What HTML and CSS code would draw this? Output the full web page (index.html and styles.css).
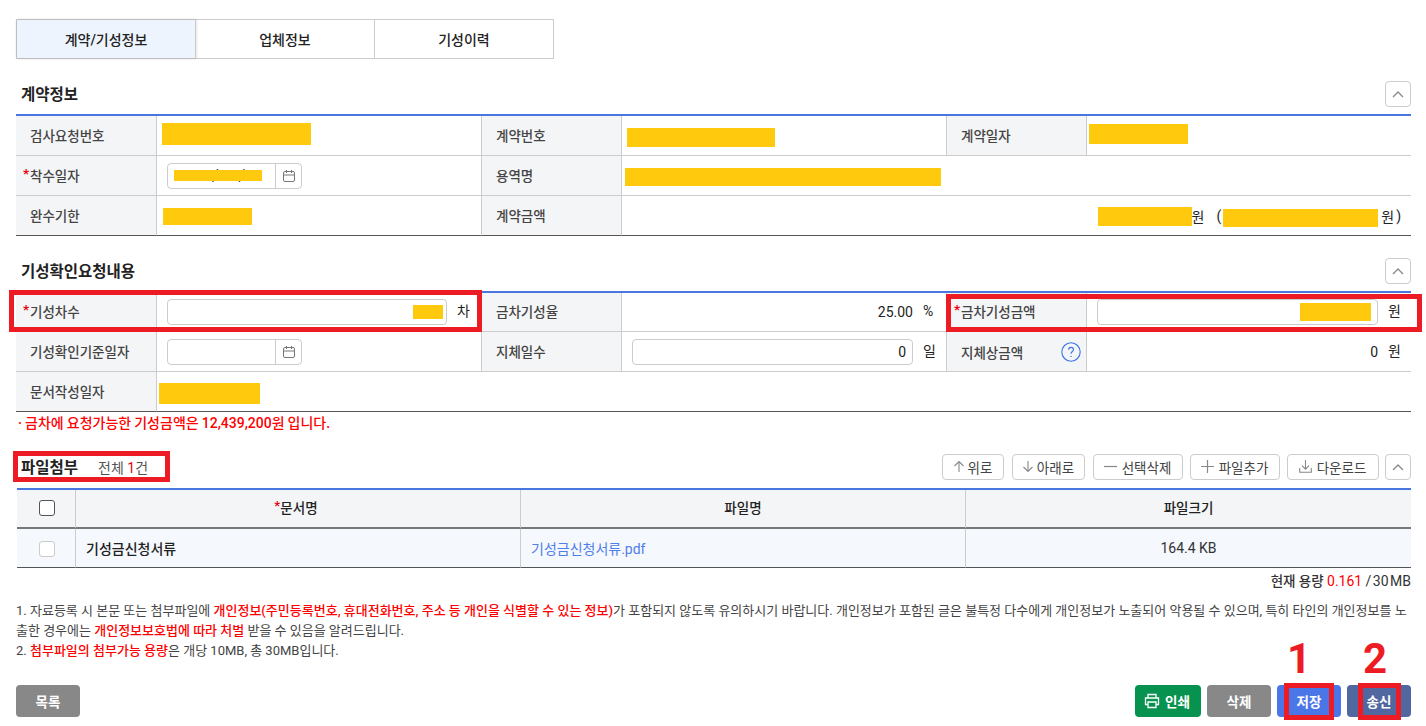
FILE: index.html
```html
<!DOCTYPE html>
<html lang="ko">
<head>
<meta charset="utf-8">
<title>기성확인요청</title>
<link rel="stylesheet" href="styles.css">
</head>
<body>
<div class="topbar"></div>
<main class="page">
  <nav class="tabs">
    <a class="tab active">계약/기성정보</a>
    <a class="tab">업체정보</a>
    <a class="tab">기성이력</a>
  </nav>

  <section class="sec">
    <header class="sec-head">
      <h2>계약정보</h2>
      <button class="btn-fold"><svg width="12" height="8" viewBox="0 0 12 8"><path d="M1 7l5-5 5 5" fill="none" stroke="#888" stroke-width="1.3"/></svg></button>
    </header>
    <table class="form">
      <colgroup><col class="c1"><col class="c2"><col class="c3"><col class="c4"><col class="c5"><col class="c6"></colgroup>
      <tr>
        <th>검사요청번호</th>
        <td><div class="cell flush"><span class="red r-insp"></span></div></td>
        <th>계약번호</th>
        <td><div class="cell flush"><span class="red r-cno"></span></div></td>
        <th>계약일자</th>
        <td class="last"><div class="cell flush"><span class="red r-cdate"></span></div></td>
      </tr>
      <tr>
        <th><i class="req">*</i>착수일자</th>
        <td><div class="cell">
          <div class="date"><span class="date-val"><span class="slashes">/&nbsp;&nbsp;&nbsp;&nbsp;&nbsp;/</span><span class="red r-start"></span></span><span class="date-ic"><svg width="14" height="14" viewBox="0 0 14 14"><rect x="1.5" y="2.5" width="11" height="10" rx="1.5" fill="none" stroke="#777"/><path d="M1.5 6h11M4.5 1v3M9.5 1v3" fill="none" stroke="#777"/></svg></span></div>
        </div></td>
        <th>용역명</th>
        <td colspan="3" class="last"><div class="cell flush"><span class="red r-name"></span></div></td>
      </tr>
      <tr class="end">
        <th>완수기한</th>
        <td><div class="cell flush"><span class="red r-due"></span></div></td>
        <th>계약금액</th>
        <td colspan="3" class="last"><div class="cell right amount">
          <span class="red r-amt1"></span><span>원</span><span class="paren">(</span><span class="red r-amt2"></span><span class="won2">원</span><span class="paren2">)</span>
        </div></td>
      </tr>
    </table>
  </section>

  <section class="sec">
    <header class="sec-head">
      <h2>기성확인요청내용</h2>
      <button class="btn-fold"><svg width="12" height="8" viewBox="0 0 12 8"><path d="M1 7l5-5 5 5" fill="none" stroke="#888" stroke-width="1.3"/></svg></button>
    </header>
    <table class="form tight">
      <colgroup><col class="c1"><col class="c2"><col class="c3"><col class="c4"><col class="c5"><col class="c6"></colgroup>
      <tr>
        <th><i class="req">*</i>기성차수</th>
        <td><div class="cell">
          <div class="input w-seq"><span class="red r-seq"></span></div><span class="unit">차</span>
        </div></td>
        <th>금차기성율</th>
        <td><div class="cell right"><span class="val">25.00</span><span class="unit">%</span></div></td>
        <th><i class="req">*</i>금차기성금액</th>
        <td class="last"><div class="cell">
          <div class="input w-amt"><span class="red r-cur"></span></div><span class="unit">원</span>
        </div></td>
      </tr>
      <tr>
        <th>기성확인기준일자</th>
        <td><div class="cell">
          <div class="date"><span class="date-val"></span><span class="date-ic"><svg width="14" height="14" viewBox="0 0 14 14"><rect x="1.5" y="2.5" width="11" height="10" rx="1.5" fill="none" stroke="#777"/><path d="M1.5 6h11M4.5 1v3M9.5 1v3" fill="none" stroke="#777"/></svg></span></div>
        </div></td>
        <th>지체일수</th>
        <td><div class="cell">
          <div class="input w-delay">0</div><span class="unit">일</span>
        </div></td>
        <th><div class="th-flex">지체상금액<svg class="help" width="20" height="20" viewBox="0 0 20 20"><circle cx="10" cy="10" r="9.2" fill="none" stroke="#3f73e6" stroke-width="1.1"/><path d="M7.6 7.8c0-1.5 1.1-2.4 2.5-2.4s2.4.9 2.4 2.2c0 1.9-2.5 2-2.5 4.2" fill="none" stroke="#3f73e6" stroke-width="1.1"/><circle cx="10" cy="14.4" r=".7" fill="#3f73e6"/></svg></div></th>
        <td class="last"><div class="cell right"><span class="val">0</span><span class="unit">원</span></div></td>
      </tr>
      <tr class="end">
        <th>문서작성일자</th>
        <td colspan="5" class="last"><div class="cell flush"><span class="red r-doc"></span></div></td>
      </tr>
    </table>
    <p class="notice">· 금차에 요청가능한 기성금액은 12,439,200원 입니다.</p>
  </section>

  <section class="files">
    <header class="file-head">
      <div class="file-title"><h2>파일첨부</h2><span class="count">전체 <b>1</b>건</span></div>
      <div class="tools">
        <button class="tool t-up"><svg width="12" height="13" viewBox="0 0 12 13"><path d="M6 12V1.5M1.5 6L6 1.5 10.5 6" fill="none" stroke="#888" stroke-width="1.1"/></svg>위로</button>
        <button class="tool t-down"><svg width="12" height="13" viewBox="0 0 12 13"><path d="M6 1v10.5M1.5 7L6 11.5 10.5 7" fill="none" stroke="#888" stroke-width="1.1"/></svg>아래로</button>
        <button class="tool t-del"><svg width="13" height="13" viewBox="0 0 13 13"><path d="M0 6.5h13" fill="none" stroke="#888" stroke-width="1.2"/></svg>선택삭제</button>
        <button class="tool t-add"><svg width="13" height="13" viewBox="0 0 13 13"><path d="M0 6.5h13M6.5 0v13" fill="none" stroke="#888" stroke-width="1.2"/></svg>파일추가</button>
        <button class="tool t-get"><svg width="13" height="13" viewBox="0 0 13 13"><path d="M6.5 0v9M3 5.7l3.5 3.5L10 5.7M.7 8v4.3h11.6V8" fill="none" stroke="#888" stroke-width="1.1"/></svg>다운로드</button>
        <button class="btn-fold"><svg width="12" height="8" viewBox="0 0 12 8"><path d="M1 7l5-5 5 5" fill="none" stroke="#888" stroke-width="1.3"/></svg></button>
      </div>
    </header>
    <table class="grid">
      <colgroup><col class="g1"><col class="g2"><col class="g3"><col class="g4"></colgroup>
      <thead>
        <tr>
          <th><span class="cb cb-dark"></span></th>
          <th class="th-req"><i class="req-up">*</i>문서명</th>
          <th>파일명</th>
          <th class="last">파일크기</th>
        </tr>
      </thead>
      <tbody>
        <tr>
          <td><span class="cb"></span></td>
          <td class="doc">기성금신청서류</td>
          <td class="link">기성금신청서류.pdf</td>
          <td class="last">164.4 KB</td>
        </tr>
      </tbody>
    </table>
    <p class="cap">현재 용량 <em>0.161</em> <span class="cap-max">/ 30 MB</span></p>
  </section>

  <div class="notes">
    1. 자료등록 시 본문 또는 첨부파일에 <b>개인정보(주민등록번호, 휴대전화번호, 주소 등 개인을 식별할 수 있는 정보)</b>가 포함되지 않도록 유의하시기 바랍니다. 개인정보가 포함된 글은 불특정 다수에게 개인정보가 노출되어 악용될 수 있으며, 특히 타인의 개인정보를 노<br>
    출한 경우에는 <b>개인정보보호법에 따라 처벌</b> 받을 수 있음을 알려드립니다.<br>
    2. <b>첨부파일의 첨부가능 용량</b>은 개당 10MB, 총 30MB입니다.
  </div>

  <footer class="actions">
    <button class="act gray">목록</button>
    <div class="act-right">
      <button class="act green print"><svg width="16" height="16" viewBox="0 0 16 16"><path d="M4 5V1.5h8V5M4 11.5H1.5V5h13v6.5H12M4 9h8v5.5H4z" fill="none" stroke="#fff" stroke-width="1.3"/></svg>인쇄</button>
      <button class="act gray">삭제</button>
      <button class="act blue">저장</button>
      <button class="act navy">송신</button>
    </div>
  </footer>
</main>

<div class="mark m-seq"></div>
<div class="mark m-cur"></div>
<div class="mark m-file"></div>
<div class="mark m-save"></div>
<div class="mark m-send"></div>
<div class="digit d-1">1</div>
<div class="digit d-2">2</div>
</body>
</html>
```

FILE: styles.css
```css
* { box-sizing: border-box; }
html, body { margin: 0; padding: 0; }
body {
  position: relative;
  width: 1426px;
  height: 726px;
  overflow: hidden;
  background: #fff;
  color: #222;
  font-family: Roboto, "Noto Sans CJK KR", sans-serif;
  font-size: 14px;
}
.topbar { height: 0; box-shadow: 0 0 8px rgba(0,0,0,.22); }
.page { width: 1395px; margin-left: 16px; padding-top: 19px; }
h2 { margin: 0; padding-bottom: 3px; font-size: 15.5px; font-weight: 700; color: #222; }
button { font-family: inherit; padding: 0; cursor: pointer; }
i, em { font-style: normal; }

.tabs { display: flex; width: 538px; height: 40px; border: 1px solid #ccc; }
.tab { flex: 1; display: flex; align-items: center; justify-content: center; padding-bottom: 1px; font-size: 14px; font-weight: 500; border-right: 1px solid #ccc; }
.tab:last-child { border-right: 0; }
.tab.active { background: #edf4fd; box-shadow: 0 0 3px rgba(0,0,0,.2); }

.sec { margin-top: 22px; }
.sec-head { display: flex; justify-content: space-between; align-items: center; height: 26px; margin-bottom: 7px; padding-left: 5px; }
.btn-fold { width: 26px; height: 26px; border: 1px solid #ccc; border-radius: 4px; background: #fff; display: flex; align-items: center; justify-content: center; }

table { border-collapse: separate; border-spacing: 0; table-layout: fixed; width: 100%; }
.c1 { width: 141px; } .c2 { width: 325px; } .c3 { width: 140px; } .c4 { width: 325px; } .c5 { width: 140px; } .c6 { width: 324px; }
.form { border-top: 2px solid #4a76e0; }
.form tr { height: 40px; }
.form.tight tr:first-child { height: 39px; }
.form.tight tr:first-child .cell { height: 38px; }
.form th, .form td { padding: 0; border-bottom: 1px solid #ccc; border-right: 1px solid #ccc; font-size: 14px; }
.form th { position: relative; background: #f4f5f7; color: #444; font-size: 13.5px; font-weight: 500; text-align: left; padding: 0 0 2px 14px; }
.form td.last { border-right: 0; }
.form .end th, .form .end td { border-bottom: 1px solid #555; }
.req { position: absolute; left: 7px; top: 50%; margin-top: -11px; color: #e60012; font-weight: 700; }
.th-flex { display: flex; align-items: center; justify-content: space-between; padding: 2px 5px 0 0; }
.help { display: block; }

.cell { display: flex; align-items: center; height: 39px; padding: 0 10px; }
.cell.flush { padding: 0; }
.cell.right { justify-content: flex-end; }
.val { color: #222; }
.unit { flex: none; width: 13px; margin-left: 10px; color: #222; position: relative; top: -1px; line-height: 1; white-space: nowrap; }
.red { display: block; background: #ffc90e; flex: none; position: relative; }
.r-insp { width: 149px; height: 22px; margin-left: 5px; margin-top: -3px; }
.r-cno { width: 148px; height: 19px; margin-left: 5px; margin-top: 3px; }
.r-cdate { width: 99px; height: 20px; margin-left: 2px; margin-top: -3px; }
.r-name { width: 316px; height: 18px; margin-left: 3px; margin-top: 3px; }
.r-due { width: 89px; height: 17px; margin-left: 6px; margin-top: 2px; }
.r-start { width: 88px; height: 11px; margin-left: 6px; }
.slashes { position: absolute; left: 44px; top: 2px; color: #333; font-size: 16px; line-height: 20px; }
.amount { padding-right: 10px; }
.r-amt1 { width: 94px; height: 19px; margin-top: 1px; }
.paren { margin-left: 12px; margin-right: 2px; }
.r-amt2 { width: 155px; height: 18px; margin-top: 5px; }
.won2 { margin-left: 3px; }
.paren2 { margin-left: 2px; }
.r-seq { width: 30px; height: 14px; }
.r-cur { width: 71px; height: 18px; }
.r-doc { width: 101px; height: 21px; margin-left: 2px; margin-top: 3px; }

.date { display: flex; flex: none; width: 135px; height: 26px; border: 1px solid #ccc; border-radius: 4px; }
.date-val { flex: 1; display: flex; align-items: center; position: relative; }
.date-ic { width: 26px; border-left: 1px solid #ccc; display: flex; align-items: center; justify-content: center; }
.input { flex: none; height: 26px; border: 1px solid #ccc; border-radius: 4px; display: flex; align-items: center; justify-content: flex-end; }
.w-seq { width: 280px; padding-right: 3px; }
.w-amt { width: 281px; padding-right: 6px; }
.w-delay { width: 281px; padding-right: 6px; }

.notice { margin: 1px 0 0; height: 20px; line-height: 20px; color: #f00; font-size: 14px; font-weight: 500; padding-left: 2px; word-spacing: -.4px; }

.files { margin-top: 21px; }
.file-head { display: flex; justify-content: space-between; align-items: center; height: 26px; margin-bottom: 8px; padding-left: 5px; }
.file-title { display: flex; align-items: center; }
.count { margin-left: 20px; padding-bottom: 1px; font-size: 14px; color: #555; }
.count b { color: #e60012; font-weight: 400; }
.tools { display: flex; }
.tool { display: flex; align-items: center; justify-content: center; gap: 3px; height: 26px; margin-right: 8px; padding: 0 1px 1px 0; border: 1px solid #ccc; border-radius: 4px; background: #fff; color: #444; font-size: 13.5px; }
.tool:nth-child(5) { margin-right: 6px; }
.t-up { width: 62px; } .t-down { width: 73px; } .t-del { width: 90px; margin-right: 7px; } .t-add { width: 90px; margin-right: 7px; } .t-get { width: 92px; }
.t-del, .t-add, .t-get { gap: 5px; }

.grid { width: 1394px; margin-left: 1px; border-top: 2px solid #4a76e0; }
.g1 { width: 59px; } .g2 { width: 445px; } .g3 { width: 445px; } .g4 { width: 445px; }
.grid th, .grid td { padding: 0; text-align: center; border-right: 1px solid #ccc; font-size: 14px; }
.grid th { height: 39px; padding-bottom: 3px; background: #f4f5f7; font-size: 13.5px; font-weight: 500; color: #222; border-bottom: 2px solid #777; }
.grid td { height: 39px; background: #f5f8fd; border-bottom: 1px solid #555; color: #333; }
.grid .last { border-right: 0; }
.grid td.doc { text-align: left; padding-left: 10px; font-weight: 500; color: #222; }
.grid td.link { text-align: left; padding-left: 10px; color: #4f7fea; }
.grid th.th-req { padding-right: 4px; }
.req-up { color: #e60012; position: relative; top: -3px; }
.cb { display: inline-block; vertical-align: middle; width: 16px; height: 16px; margin-left: 1px; border: 1px solid #ccc; border-radius: 3px; background: #fff; }
.cb-dark { border-color: #555; }
.cap { margin: 4px 0 0; height: 18px; line-height: 18px; text-align: right; font-size: 13.5px; font-weight: 500; color: #333; }
.cap em { color: #f00; font-size: 14px; font-weight: 400; }
.cap-max { font-size: 14px; font-weight: 400; word-spacing: -2px; }

.notes { margin-top: 11px; font-size: 13px; line-height: 20px; color: #444; white-space: nowrap; }
.notes b { color: #f00; font-weight: 500; }

.actions { display: flex; justify-content: space-between; margin-top: 24px; }
.act-right { display: flex; gap: 6px; }
.act { width: 64px; height: 32px; border: 0; border-radius: 4px; color: #fff; font-size: 13.5px; font-weight: 700; display: flex; align-items: center; justify-content: center; }
.gray { background: #888; }
.green { background: #07924f; }
.blue { background: #4a76e8; }
.navy { background: #5167a0; }
.print { width: 66px; gap: 5px; padding-right: 2px; }

.mark { position: absolute; border: 5px solid #ed1c24; }
.m-seq { left: 9px; top: 290px; width: 473px; height: 42px; }
.m-cur { left: 946px; top: 294px; width: 476px; height: 38px; }
.m-file { left: 13px; top: 451px; width: 157px; height: 31px; }
.m-save { left: 1284px; top: 683px; width: 50px; height: 37px; }
.m-send { left: 1358px; top: 683px; width: 43px; height: 37px; }
.digit { position: absolute; top: 635px; font-size: 42px; line-height: 48px; font-weight: 700; color: #ed1c24; font-family: Roboto, sans-serif; }
.d-1 { left: 1287px; }
.d-2 { left: 1363px; }
```
